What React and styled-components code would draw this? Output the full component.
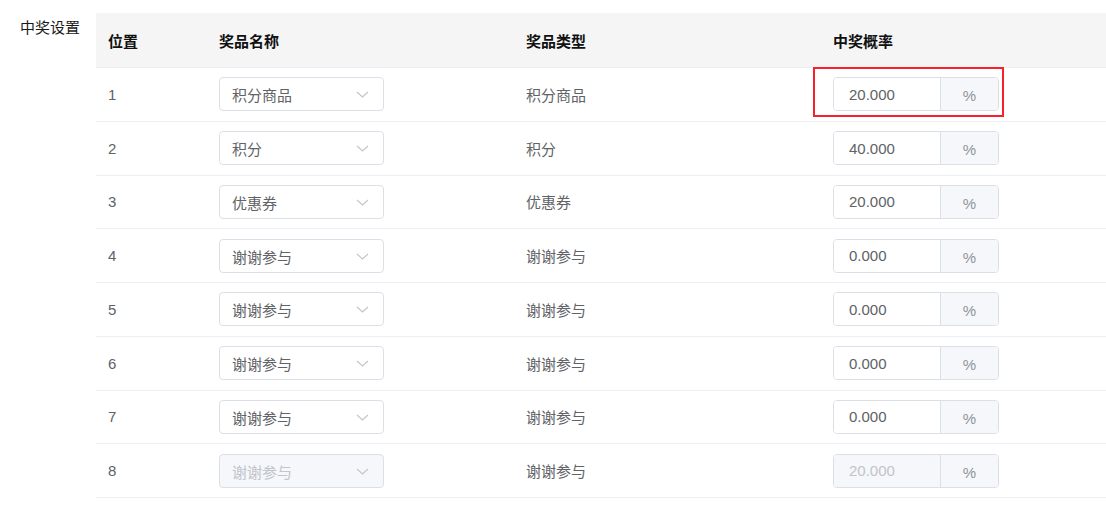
import React from "react";
import styled, { createGlobalStyle } from "styled-components";

const Global = createGlobalStyle`
  html, body { margin: 0; padding: 0; background: #fff; }
  body { font-family: "Liberation Sans", "Noto Sans CJK SC", sans-serif; font-size: 15px; }
  * { box-sizing: border-box; }
`;

const Page = styled.div`
  display: flex;
  padding-top: 13px;
  width: 1106px;
  height: 506px;
  overflow: hidden;
`;

const Label = styled.div`
  width: 96px;
  flex: none;
  padding-left: 20px;
  padding-top: 5px;
  line-height: 20px;
  color: #1a1a1a;
  font-size: 15px;
`;

const Table = styled.div`
  flex: 1;
  display: flex;
  flex-direction: column;
`;

const Row = styled.div`
  display: grid;
  grid-template-columns: 111px 307px 307px 1fr;
  align-items: center;
  height: ${(p) => (p.$head ? "55px" : "53.75px")};
  background: ${(p) => (p.$head ? "#f5f5f5" : "#fff")};
  border-bottom: 1px solid #ebeef5;
`;

const Cell = styled.div`
  position: relative;
  padding-left: 12px;
  font-size: 15px;
  color: ${(p) => (p.$head ? "#111" : "#606266")};
  font-weight: ${(p) => (p.$head ? 700 : 400)};
  height: 100%;
  display: flex;
  align-items: center;
`;

const Select = styled.div`
  width: 165px;
  height: 34px;
  border: 1px solid #dcdfe6;
  border-radius: 4px;
  background: ${(p) => (p.$disabled ? "#f5f7fa" : "#fff")};
  color: ${(p) => (p.$disabled ? "#c0c4cc" : "#606266")};
  display: flex;
  align-items: center;
  justify-content: space-between;
  padding: 1px 14px 0 12px;
  font-size: 15px;
`;

const InputGroup = styled.div`
  display: flex;
  width: 166px;
  height: 34px;
  border: 1px solid #dcdfe6;
  border-radius: 4px;
  overflow: hidden;
`;

const InputBox = styled.div`
  width: 107px;
  display: flex;
  align-items: center;
  padding-left: 15px;
  background: ${(p) => (p.$disabled ? "#f5f7fa" : "#fff")};
  color: ${(p) => (p.$disabled ? "#c0c4cc" : "#606266")};
  font-size: 15px;
  border-right: 1px solid #dcdfe6;
`;

const Append = styled.div`
  flex: 1;
  display: flex;
  align-items: center;
  justify-content: center;
  background: #f5f7fa;
  color: #909399;
  font-size: 15px;
  padding-top: 3px;
`;

const Highlight = styled.div`
  position: absolute;
  left: -8px;
  top: -1px;
  width: 191px;
  height: 50px;
  border: 2px solid #f5222d;
  pointer-events: none;
`;

const Chevron = () => (
  <svg width="13" height="7" viewBox="0 0 13 7">
    <polyline points="1,1 6.5,6 12,1" fill="none" stroke="#c0c4cc" strokeWidth="1.1" />
  </svg>
);

const rows = [
  { name: "积分商品", type: "积分商品", rate: "20.000" },
  { name: "积分", type: "积分", rate: "40.000" },
  { name: "优惠券", type: "优惠券", rate: "20.000" },
  { name: "谢谢参与", type: "谢谢参与", rate: "0.000" },
  { name: "谢谢参与", type: "谢谢参与", rate: "0.000" },
  { name: "谢谢参与", type: "谢谢参与", rate: "0.000" },
  { name: "谢谢参与", type: "谢谢参与", rate: "0.000" },
  { name: "谢谢参与", type: "谢谢参与", rate: "20.000", disabled: true },
];

export default function App() {
  return (
    <>
      <Global />
      <Page>
        <Label>中奖设置</Label>
        <Table>
          <Row $head>
            <Cell $head>位置</Cell>
            <Cell $head>奖品名称</Cell>
            <Cell $head>奖品类型</Cell>
            <Cell $head>中奖概率</Cell>
          </Row>
          {rows.map((r, i) => (
            <Row key={i}>
              <Cell>{i + 1}</Cell>
              <Cell>
                <Select $disabled={r.disabled}>
                  <span>{r.name}</span>
                  <Chevron />
                </Select>
              </Cell>
              <Cell>{r.type}</Cell>
              <Cell>
                <InputGroup>
                  <InputBox $disabled={r.disabled}>{r.rate}</InputBox>
                  <Append>%</Append>
                </InputGroup>
                {i === 0 && <Highlight />}
              </Cell>
            </Row>
          ))}
        </Table>
      </Page>
    </>
  );
}
